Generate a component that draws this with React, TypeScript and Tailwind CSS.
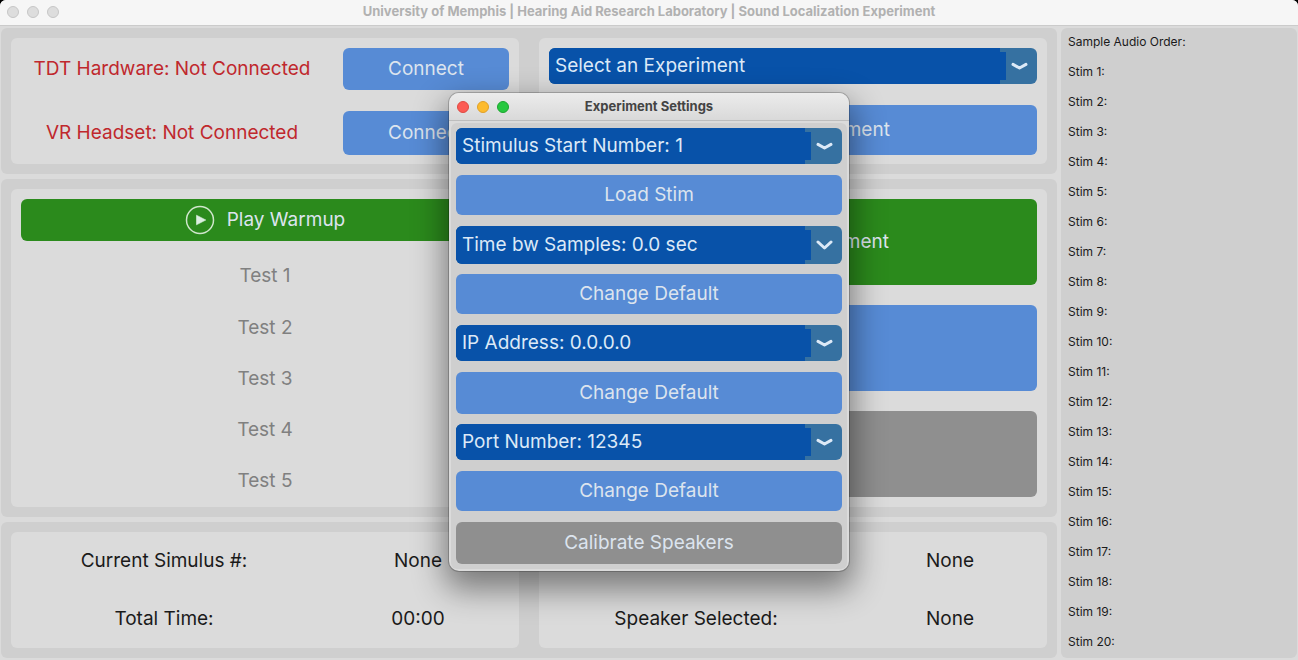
import type { ReactNode } from "react";

function Chevron({ tall }: { tall?: boolean }) {
  return (
    <svg
      className="pointer-events-none absolute top-1/2 right-2 -translate-y-1/2"
      width="18"
      height="12"
      viewBox="0 0 18 12"
      fill="none"
      stroke="#dce9f7"
      strokeWidth="3"
      strokeLinecap="round"
      strokeLinejoin="round"
      aria-hidden="true"
    >
      <path d={tall ? "M2 3 L8.5 9 L15 3" : "M2 4.4 L8.5 8 L15 4.4"} />
    </svg>
  );
}

function Dropdown({ label, value, tall }: { label: string; value: string; tall?: boolean }) {
  return (
    <div
      className={`relative w-full overflow-hidden rounded-md bg-[#3671a1] ${tall ? "h-[38px]" : "h-9"}`}
    >
      <div className="absolute inset-y-0 right-[37px] left-0 bg-[#0852a9]" />
      <div className="absolute inset-y-1 right-[31px] left-0 bg-[#0852a9]" />
      <select
        aria-label={label}
        className="relative h-full w-full appearance-none bg-transparent pr-10 pl-1.5 text-[19px] text-[#dce9f7] outline-none"
      >
        <option>{value}</option>
      </select>
      <Chevron tall={tall} />
    </div>
  );
}

function Button({ className, children, disabled }: { className: string; children: ReactNode; disabled?: boolean }) {
  return (
    <button
      type="button"
      disabled={disabled}
      className={`flex w-full items-center justify-center gap-3 rounded-md text-[19px] text-[#dce4ee] ${className}`}
    >
      {children}
    </button>
  );
}

function PlayIcon() {
  return (
    <svg width="30" height="30" viewBox="0 0 30 30" fill="none" aria-hidden="true">
      <circle cx="15" cy="15" r="13.5" stroke="#cfe6cb" strokeWidth="1.5" />
      <path d="M11.5 10.2 L20.8 15 L11.5 19.8 Z" fill="#dcefe0" stroke="#dcefe0" strokeWidth="0.6" />
    </svg>
  );
}

function Card({ className, children }: { className: string; children: ReactNode }) {
  return <div className={`rounded-md bg-[#dbdbdb] ${className}`}>{children}</div>;
}

function Section({ className, children }: { className: string; children: ReactNode }) {
  return (
    <section className={`grid grid-cols-2 gap-5 rounded-md bg-[#cfcfcf] p-2.5 ${className}`}>{children}</section>
  );
}

const stims = Array.from({ length: 20 }, (_, i) => i + 1);
const tests = [1, 2, 3, 4, 5];

function SettingsDialog() {
  return (
    <div
      role="dialog"
      aria-labelledby="settings-title"
      className="absolute inset-x-0 top-[93px] mx-auto w-[400px] overflow-hidden rounded-[10px] bg-[#dbdbdb] shadow-[0_0_0_1px_rgba(0,0,0,0.2),0_14px_32px_4px_rgba(0,0,0,0.45)]"
    >
      <header className="relative flex h-7 items-center justify-center border-b border-[#bdbdbd] bg-linear-to-b from-[#ececec] to-[#d9d9d9]">
        <div className="absolute left-2 flex gap-2">
          <span className="size-3 rounded-full border border-[#dd4a42] bg-[#fc5b54]" />
          <span className="size-3 rounded-full border border-[#dfa028] bg-[#fdbb2e]" />
          <span className="size-3 rounded-full border border-[#1ca52f] bg-[#27c840]" />
        </div>
        <h2 id="settings-title" className="text-[13px] font-bold text-[#444444]">
          Experiment Settings
        </h2>
      </header>
      <div className="p-0.5">
        <div className="flex flex-col rounded-md bg-[#cfcfcf] p-[5px]">
          <div className="flex flex-col gap-[11px]">
            <Dropdown label="Stimulus start number" value="Stimulus Start Number: 1" />
            <Button className="h-10 bg-[#578bd5]">Load Stim</Button>
            <Dropdown label="Time between samples" value="Time bw Samples: 0.0 sec" tall />
          </div>
          <div className="mt-2.5 flex flex-col gap-[11px]">
            <Button className="h-10 bg-[#578bd5]">Change Default</Button>
            <Dropdown label="IP address" value="IP Address: 0.0.0.0" />
            <Button className="h-[42px] bg-[#578bd5]">Change Default</Button>
          </div>
          <div className="mt-2.5 flex flex-col gap-[11px]">
            <Dropdown label="Port number" value="Port Number: 12345" />
            <Button className="h-10 bg-[#578bd5]">Change Default</Button>
            <Button className="h-[42px] bg-[#8f8f8f]" disabled>
              Calibrate Speakers
            </Button>
          </div>
        </div>
      </div>
    </div>
  );
}

export default function App() {
  return (
    <div className="relative min-h-screen bg-black font-['Inter','Liberation_Sans',sans-serif] text-[19px] text-[#1a1a1a]">
      <div className="flex min-h-screen flex-col overflow-hidden rounded-t-md bg-[#dbdbdb]">
        <header className="relative flex h-[26px] shrink-0 items-center justify-center border-b border-[#cbcbcb] bg-[#f6f6f6] pb-0.5">
          <div className="absolute left-[7px] flex gap-2">
            <span className="size-3 rounded-full border border-[#c6c6c6] bg-[#dddddd]" />
            <span className="size-3 rounded-full border border-[#c6c6c6] bg-[#dddddd]" />
            <span className="size-3 rounded-full border border-[#c6c6c6] bg-[#dddddd]" />
          </div>
          <h1 className="text-[13px] font-bold text-[#b1b1b1]">
            University of Memphis | Hearing Aid Research Laboratory | Sound Localization Experiment
          </h1>
        </header>

        <div className="flex flex-1 gap-1 px-px py-0.5">
          <main className="flex flex-1 flex-col gap-[5px]">
            <Section className="h-[146px]">
              <Card className="grid grid-cols-[302fr_166fr] content-between items-center gap-x-5 px-2.5 pt-2.5 pb-[9px]">
                <p className="text-center whitespace-nowrap text-[#c0282d]">TDT Hardware: Not Connected</p>
                <Button className="h-[42px] bg-[#578bd5]">Connect</Button>
                <p className="text-center whitespace-nowrap text-[#c0282d]">VR Headset: Not Connected</p>
                <Button className="h-11 bg-[#578bd5]">Connect</Button>
              </Card>
              <Card className="flex flex-col justify-between px-2.5 pt-2.5 pb-[9px]">
                <Dropdown label="Experiment" value="Select an Experiment" />
                <Button className="h-[50px] bg-[#578bd5]">
                  <PlayIcon />
                  Load Experiment
                </Button>
              </Card>
            </Section>

            <Section className="flex-1">
              <Card className="flex flex-col px-2.5 pt-2.5">
                <Button className="h-[42px] bg-[#2b8a1c]">
                  <PlayIcon />
                  Play Warmup
                </Button>
                <ul className="mt-2.5 flex flex-1 flex-col">
                  {tests.map((n) => (
                    <li key={n} className="flex flex-1 items-center justify-center text-[#808080]">
                      Test {n}
                    </li>
                  ))}
                </ul>
              </Card>
              <Card className="flex flex-col gap-5 p-2.5">
                <Button className="flex-1 bg-[#2b8a1c]">
                  <PlayIcon />
                  Start Experiment
                </Button>
                <Button className="flex-1 bg-[#578bd5]">Pause</Button>
                <Button className="flex-1 bg-[#8f8f8f]" disabled>
                  Stop
                </Button>
              </Card>
            </Section>

            <Section className="h-[136px] text-center">
              <Card className="grid grid-cols-[286fr_182fr] items-center gap-x-5 px-2.5">
                <span>Current Simulus #:</span>
                <span>None</span>
                <span>Total Time:</span>
                <span>00:00</span>
              </Card>
              <Card className="grid grid-cols-[294fr_174fr] items-center gap-x-5 px-2.5">
                <span className="col-start-2">None</span>
                <span>Speaker Selected:</span>
                <span>None</span>
              </Card>
            </Section>
          </main>

          <aside className="w-[236px] rounded-md bg-[#cfcfcf] pl-[7px] text-[12px]">
            <h2 className="flex h-[30px] items-center pb-0.5">Sample Audio Order:</h2>
            <ul>
              {stims.map((n) => (
                <li key={n} className="flex h-[30px] items-center pb-0.5">
                  Stim {n}:
                </li>
              ))}
            </ul>
          </aside>
        </div>
      </div>
      <SettingsDialog />
    </div>
  );
}
